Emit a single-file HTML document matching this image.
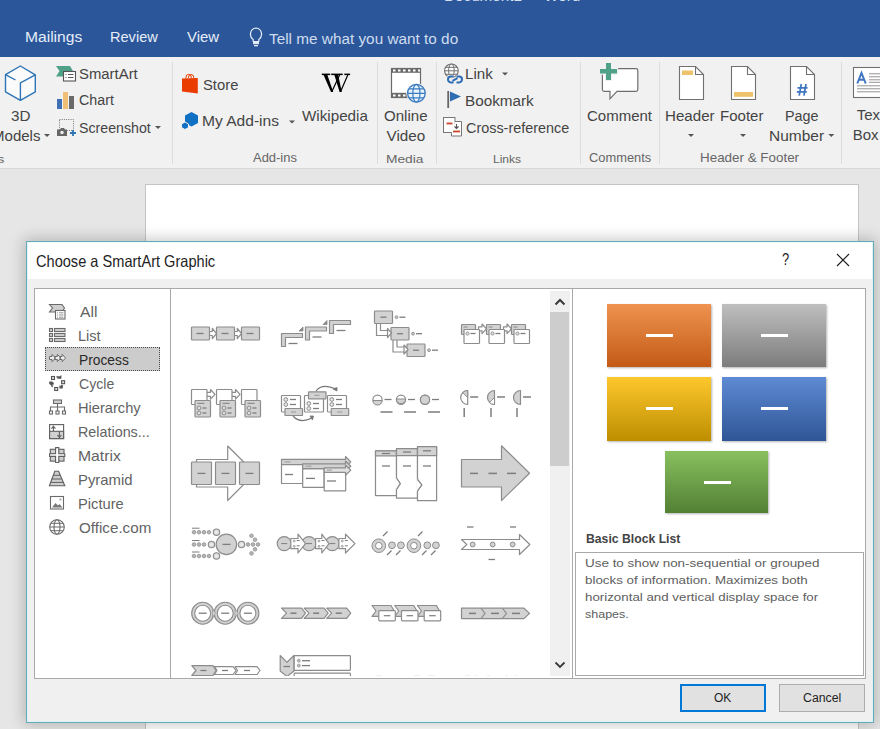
<!DOCTYPE html>
<html><head><meta charset="utf-8">
<style>
*{margin:0;padding:0;box-sizing:border-box}
html,body{width:880px;height:729px;overflow:hidden;background:#e6e6e6;font-family:"Liberation Sans",sans-serif}
.a{position:absolute;white-space:nowrap}
.t{position:absolute;white-space:pre;line-height:1;transform-origin:0 0}
</style></head><body>
<div class="a" style="left:0;top:0;width:880px;height:57px;background:#2b579a"></div>
<div class="a" style="left:0;top:57px;width:880px;height:111px;background:#f1f1f1"></div>
<div class="a" style="left:0;top:168px;width:880px;height:1px;background:#d6d6d6"></div>
<div class="a" style="left:145px;top:184px;width:714px;height:560px;background:#fff;border:1px solid #c4c4c4"></div>
<div class="t" style="left:443.78px;top:-10.67px;font-size:14.97px;color:#d5e0f0;transform:scaleX(1.0194);">Document1  -  Word</div>
<div class="t" style="left:25.05px;top:30.40px;font-size:14.53px;color:#e6edf8;transform:scaleX(1.0745);">Mailings</div>
<div class="t" style="left:110.33px;top:30.40px;font-size:14.53px;color:#e6edf8;transform:scaleX(1.0031);">Review</div>
<div class="t" style="left:187.20px;top:30.40px;font-size:14.53px;color:#e6edf8;transform:scaleX(1.0288);">View</div>
<div class="t" style="left:269.19px;top:32.00px;font-size:14.53px;color:#cfdcef;transform:scaleX(1.0561);">Tell me what you want to do</div>
<div class="a" style="left:172px;top:62px;width:1px;height:102px;background:#dcdcdc"></div>
<div class="a" style="left:377px;top:62px;width:1px;height:102px;background:#dcdcdc"></div>
<div class="a" style="left:436px;top:62px;width:1px;height:102px;background:#dcdcdc"></div>
<div class="a" style="left:580px;top:62px;width:1px;height:102px;background:#dcdcdc"></div>
<div class="a" style="left:659px;top:62px;width:1px;height:102px;background:#dcdcdc"></div>
<div class="a" style="left:841px;top:62px;width:1px;height:102px;background:#dcdcdc"></div>
<div class="t" style="left:10.89px;top:108.60px;font-size:14.53px;color:#444;transform:scaleX(1.0492);">3D</div>
<div class="t" style="left:-8.20px;top:128.50px;font-size:14.53px;color:#444;transform:scaleX(1.0353);">Models</div>
<div class="t" style="left:78.75px;top:66.50px;font-size:14.53px;color:#444;transform:scaleX(1.0258);">SmartArt</div>
<div class="t" style="left:78.79px;top:93.45px;font-size:14.53px;color:#444;transform:scaleX(0.9816);">Chart</div>
<div class="t" style="left:78.79px;top:119.88px;font-size:15.26px;color:#444;transform:scaleX(0.9304);">Screenshot</div>
<div class="t" style="left:202.86px;top:77.94px;font-size:14.24px;color:#444;transform:scaleX(1.0393);">Store</div>
<div class="t" style="left:202.36px;top:113.65px;font-size:14.83px;color:#444;transform:scaleX(1.0494);">My Add-ins</div>
<div class="t" style="left:302.40px;top:107.90px;font-size:15.12px;color:#444;transform:scaleX(1.0060);">Wikipedia</div>
<div class="t" style="left:252.70px;top:151.92px;font-size:12.50px;color:#666;transform:scaleX(1.0357);">Add-ins</div>
<div class="t" style="left:383.50px;top:109.03px;font-size:14.97px;color:#444;transform:scaleX(1.0067);">Online</div>
<div class="t" style="left:386.50px;top:128.08px;font-size:15.26px;color:#444;">Video</div>
<div class="t" style="left:386.30px;top:152.53px;font-size:11.77px;color:#666;transform:scaleX(1.1699);">Media</div>
<div class="t" style="left:465.29px;top:67.45px;font-size:14.83px;color:#444;transform:scaleX(1.0214);">Link</div>
<div class="t" style="left:465.28px;top:93.95px;font-size:14.83px;color:#444;transform:scaleX(1.0301);">Bookmark</div>
<div class="t" style="left:465.68px;top:119.88px;font-size:15.26px;color:#444;transform:scaleX(0.9444);">Cross-reference</div>
<div class="t" style="left:493.34px;top:152.53px;font-size:11.77px;color:#666;transform:scaleX(1.0216);">Links</div>
<div class="t" style="left:586.75px;top:108.08px;font-size:15.26px;color:#444;transform:scaleX(0.9829);">Comment</div>
<div class="t" style="left:588.96px;top:152.04px;font-size:12.35px;color:#666;transform:scaleX(1.0429);">Comments</div>
<div class="t" style="left:665.49px;top:108.08px;font-size:15.26px;color:#444;transform:scaleX(0.9921);">Header</div>
<div class="t" style="left:720.40px;top:108.08px;font-size:15.26px;color:#444;transform:scaleX(0.9852);">Footer</div>
<div class="t" style="left:785.15px;top:108.08px;font-size:15.26px;color:#444;transform:scaleX(0.9399);">Page</div>
<div class="t" style="left:769.16px;top:128.08px;font-size:15.26px;color:#444;transform:scaleX(1.0151);">Number</div>
<div class="t" style="left:700.33px;top:152.04px;font-size:12.35px;color:#666;transform:scaleX(1.0855);">Header &amp; Footer</div>
<div class="t" style="left:856.70px;top:107.53px;font-size:14.97px;color:#444;">Text</div>
<div class="t" style="left:852.80px;top:127.73px;font-size:14.97px;color:#444;">Box</div>
<div class="t" style="left:-3.44px;top:152.53px;font-size:11.77px;color:#666;transform:scaleX(1.2548);">s</div>
<div class="a" style="left:26px;top:241px;width:848px;height:482px;background:#f0f0f0;border:1px solid #67aab9;box-shadow:0 0 14px 2px rgba(0,0,0,.22)"></div>
<div class="a" style="left:27px;top:242px;width:846px;height:37px;background:#fff"></div>
<div class="a" style="left:27px;top:242px;width:846px;height:480px;border:1px solid #dcf3f6;border-top-color:#eefafb"></div>
<div class="t" style="left:35.67px;top:253.22px;font-size:16.28px;color:#1e1e1e;transform:scaleX(0.8968);">Choose a SmartArt Graphic</div>
<div class="t" style="left:782.48px;top:251.97px;font-size:16.57px;color:#1e1e1e;transform:scaleX(0.7795);">?</div>
<div class="a" style="left:34px;top:288px;width:832px;height:391px;background:#fff;border:1px solid #a9a9a9"></div>
<div class="a" style="left:170px;top:289px;width:1px;height:389px;background:#a9a9a9"></div>
<div class="a" style="left:572px;top:289px;width:1px;height:389px;background:#a9a9a9"></div>
<div class="a" style="left:45px;top:347px;width:115px;height:24px;background:#cccccc;border:1px dotted #4a4a4a"></div>
<div class="t" style="left:79.60px;top:304.10px;font-size:15.12px;color:#636363;transform:scaleX(1.0396);">All</div>
<div class="t" style="left:78.44px;top:328.10px;font-size:15.12px;color:#636363;transform:scaleX(0.9631);">List</div>
<div class="t" style="left:78.50px;top:352.10px;font-size:15.12px;color:#2a2a2a;transform:scaleX(0.9129);">Process</div>
<div class="t" style="left:78.89px;top:376.10px;font-size:15.12px;color:#636363;transform:scaleX(0.9344);">Cycle</div>
<div class="t" style="left:78.43px;top:400.10px;font-size:15.12px;color:#636363;transform:scaleX(0.9687);">Hierarchy</div>
<div class="t" style="left:78.45px;top:424.10px;font-size:15.12px;color:#636363;transform:scaleX(0.9492);">Relations...</div>
<div class="t" style="left:78.34px;top:448.10px;font-size:15.12px;color:#636363;transform:scaleX(1.0414);">Matrix</div>
<div class="t" style="left:78.41px;top:472.10px;font-size:15.12px;color:#636363;transform:scaleX(0.9848);">Pyramid</div>
<div class="t" style="left:78.43px;top:496.10px;font-size:15.12px;color:#636363;transform:scaleX(0.9713);">Picture</div>
<div class="t" style="left:78.99px;top:520.10px;font-size:15.12px;color:#636363;transform:scaleX(1.0051);">Office.com</div>
<div class="a" style="left:550px;top:291px;width:20px;height:385px;background:#f0f0f0"></div>
<div class="a" style="left:550px;top:312px;width:19px;height:154px;background:#cdcdcd"></div>
<div class="a" style="left:607px;top:304px;width:104px;height:63px;background:linear-gradient(#ef9350,#c35a16);box-shadow:1px 1px 2px rgba(0,0,0,.3)"><i style="position:absolute;left:39px;top:30px;width:27px;height:3px;background:#fff"></i></div>
<div class="a" style="left:722px;top:304px;width:104px;height:63px;background:linear-gradient(#bfbfbf,#7c7c7c);box-shadow:1px 1px 2px rgba(0,0,0,.3)"><i style="position:absolute;left:39px;top:30px;width:27px;height:3px;background:#fff"></i></div>
<div class="a" style="left:607px;top:377px;width:104px;height:64px;background:linear-gradient(#fdc82d,#bd8e00);box-shadow:1px 1px 2px rgba(0,0,0,.3)"><i style="position:absolute;left:39px;top:30px;width:27px;height:3px;background:#fff"></i></div>
<div class="a" style="left:722px;top:377px;width:104px;height:64px;background:linear-gradient(#5f8bd4,#2e5596);box-shadow:1px 1px 2px rgba(0,0,0,.3)"><i style="position:absolute;left:39px;top:30px;width:27px;height:3px;background:#fff"></i></div>
<div class="a" style="left:665px;top:451px;width:103px;height:62px;background:linear-gradient(#88c05f,#528034);box-shadow:1px 1px 2px rgba(0,0,0,.3)"><i style="position:absolute;left:39px;top:30px;width:27px;height:3px;background:#fff"></i></div>
<div class="t" style="left:585.77px;top:532.94px;font-size:12.35px;color:#444;font-weight:bold;transform:scaleX(0.9893);">Basic Block List</div>
<div class="a" style="left:575px;top:552px;width:289px;height:124px;background:#fff;border:1px solid #a9a9a9"></div>
<div class="t" style="left:584.76px;top:558.00px;font-size:11.34px;color:#5e5e5e;transform:scaleX(1.1861);">Use to show non-sequential or grouped</div>
<div class="t" style="left:584.90px;top:575.00px;font-size:11.34px;color:#5e5e5e;transform:scaleX(1.1794);">blocks of information. Maximizes both</div>
<div class="t" style="left:584.77px;top:592.00px;font-size:11.34px;color:#5e5e5e;transform:scaleX(1.1756);">horizontal and vertical display space for</div>
<div class="t" style="left:585.32px;top:609.00px;font-size:11.34px;color:#5e5e5e;transform:scaleX(1.1039);">shapes.</div>
<div class="a" style="left:680px;top:684px;width:86px;height:28px;background:#e1e1e1;border:2px solid #0078d7"></div>
<div class="a" style="left:779px;top:684px;width:86px;height:28px;background:#e1e1e1;border:1px solid #adadad"></div>
<div class="t" style="left:713.82px;top:692.42px;font-size:12.50px;color:#1e1e1e;transform:scaleX(0.9554);">OK</div>
<div class="t" style="left:802.99px;top:692.42px;font-size:12.50px;color:#1e1e1e;transform:scaleX(0.9840);">Cancel</div>
<svg class="a" style="left:0;top:0" width="880" height="729" viewBox="0 0 880 729"><defs><clipPath id="gc"><rect x="171" y="289" width="379" height="387"/></clipPath></defs><g id="ribbon">
<!-- lightbulb -->
<path d="M253.2,39.6 C249,36.5 249.5,28.8 256,28 C262.5,28.8 263,36.5 258.8,39.6 V41.5 H253.2 Z" fill="none" stroke="#e4ecf7" stroke-width="1.2"/>
<rect x="253" y="41" width="6" height="3.2" fill="#e4ecf7"/>
<rect x="254" y="45" width="4" height="1.3" fill="#e4ecf7"/>
<!-- 3D cube -->
<path d="M20.4,66 L35.3,74.8 L35.3,91.8 L20.4,100.4 L5.5,91.8 L5.5,74.6 Z" fill="#fbfbfb" stroke="#2e75b6" stroke-width="1.4" stroke-linejoin="round"/>
<path d="M35.3,74.8 L20.4,83 L20.4,100.4 M5.5,74.6 L15.5,80" fill="none" stroke="#2e75b6" stroke-width="1.4"/>
<!-- dropdown arrows -->
<path d="M44,134 h6 l-3,3 z" fill="#555"/>
<path d="M155,126 h6 l-3,3 z" fill="#555"/>
<path d="M289,120.5 h6 l-3,3 z" fill="#555"/>
<path d="M502,72.5 h6 l-3,3 z" fill="#555"/>
<path d="M688,134 h6 l-3,3 z" fill="#555"/>
<path d="M740,134 h6 l-3,3 z" fill="#555"/>
<path d="M828.3,134 h6 l-3,3 z" fill="#555"/>
<!-- SmartArt -->
<path d="M56,66 H70 L73,71 L70,76.5 H56 L59.5,71 Z" fill="#4fa287"/>
<rect x="63.5" y="71.5" width="12" height="9.5" fill="#fff" stroke="#555" stroke-width="1.1"/>
<path d="M65.5,74.5 h1 M68,74.5 h5.5 M65.5,77.5 h1 M68,77.5 h5.5" stroke="#555" stroke-width="1"/>
<!-- Chart -->
<rect x="57" y="99" width="5" height="10" fill="#3f6fb5"/>
<rect x="63" y="92" width="5" height="17" fill="#f0bf76"/>
<rect x="69" y="96" width="5" height="13" fill="#6a6a6a"/>
<!-- Screenshot -->
<rect x="59.5" y="119.5" width="14" height="11" fill="none" stroke="#777" stroke-width="1" stroke-dasharray="1,1.2"/>
<path d="M57,129.5 h3 l1,-1.5 h3 l1,1.5 h2 v6.5 h-10 z" fill="#666"/>
<circle cx="62" cy="132.5" r="1.7" fill="#f1f1f1"/>
<path d="M73,130 v6 M70,133 h6" stroke="#2e75b6" stroke-width="1.8"/>
<!-- Store -->
<path d="M186,78.5 v-1.5 a2.6,2.6 0 0 1 5.2,0 v1.5 M188.5,78 v-0.8 a2.6,2.6 0 0 1 5.2,0 v1" fill="none" stroke="#eb3c00" stroke-width="1"/>
<path d="M182,78.5 L197.8,78 L197.8,93.5 L182,91.5 Z" fill="#eb3c00"/>
<!-- My Add-ins -->
<path d="M191.5,112 L198,115.5 L198,123 L191.5,126.5 L185,123 L185,115.5 Z" fill="#1070c4"/>
<path d="M185,122 L188.5,124 L188.5,127.5 L185,129.5 L181.5,127.5 L181.5,124 Z" fill="#1070c4" stroke="#f1f1f1" stroke-width="1"/>
<!-- Wikipedia W -->
<g fill="#000"><rect x="321.8" y="73.6" width="8.4" height="1.5"/><rect x="331.2" y="73.6" width="11.5" height="1.5"/><rect x="344.3" y="73.6" width="5.8" height="1.5"/>
<polygon points="323.6,75 327.4,75 333.2,91.9 331,91.9"/><polygon points="334.4,75 338.2,75 341.8,91.9 339.6,91.9"/></g>
<path d="M331.9,91.5 L339.6,75 M340.6,91.5 L347.8,75" stroke="#000" stroke-width="1.2"/>
<!-- Online video -->
<rect x="391.5" y="68.5" width="29" height="29" fill="#fff" stroke="#6a6a6a" stroke-width="1.2"/>
<rect x="391" y="68" width="30" height="4.8" fill="#6a6a6a"/>
<rect x="391" y="92.8" width="30" height="5" fill="#6a6a6a"/>
<path d="M393,69.5 h2.5 v2 h-2.5z M398,69.5 h2.5 v2 h-2.5z M403,69.5 h2.5 v2 h-2.5z M408,69.5 h2.5 v2 h-2.5z M413,69.5 h2.5 v2 h-2.5z M418,69.5 h2 v2 h-2z M393,94.5 h2.5 v2 h-2.5z M398,94.5 h2.5 v2 h-2.5z M403,94.5 h2.5 v2 h-2.5z" fill="#fff"/>
<circle cx="416.4" cy="93.3" r="10.2" fill="#f1f1f1"/>
<circle cx="416.4" cy="93.3" r="8.8" fill="#e8f3fb" stroke="#3b7cc0" stroke-width="1.3"/>
<ellipse cx="416.4" cy="93.3" rx="3.6" ry="8.8" fill="none" stroke="#3b7cc0" stroke-width="1.2"/>
<path d="M407.6,93.3 h17.6 M409,88.8 h14.8 M409,97.8 h14.8" stroke="#3b7cc0" stroke-width="1.2"/>
<!-- Link -->
<circle cx="451.4" cy="70.8" r="6.8" fill="#fff" stroke="#707070" stroke-width="1.1"/>
<ellipse cx="451.4" cy="70.8" rx="2.8" ry="6.8" fill="none" stroke="#707070" stroke-width="1"/>
<path d="M444.6,70.8 h13.6 M445.6,67.3 h11.6 M445.6,74.3 h11.6" stroke="#707070" stroke-width="1"/>
<path d="M453.5,76.6 h-2.6 a2.9,2.9 0 0 0 0,5.8 h2.6 M456.5,76.6 h2.6 a2.9,2.9 0 0 1 0,5.8 h-2.6 M452.5,80.8 l5,-2.6" fill="none" stroke="#f1f1f1" stroke-width="3.4"/>
<path d="M453.5,76.6 h-2.6 a2.9,2.9 0 0 0 0,5.8 h2.6 M456.5,76.6 h2.6 a2.9,2.9 0 0 1 0,5.8 h-2.6 M452.5,80.8 l5,-2.6" fill="none" stroke="#2e6db4" stroke-width="2"/>
<!-- Bookmark -->
<rect x="447.3" y="91" width="1.8" height="17" fill="#666"/>
<path d="M450,91.5 L461,96.5 L450,101.5 Z" fill="#2e6db4"/>
<!-- Cross reference -->
<rect x="443.5" y="117.5" width="11.5" height="15" fill="#fff" stroke="#777" stroke-width="1"/>
<path d="M446.5,123.5 h6" stroke="#c8472b" stroke-width="1.8"/>
<path d="M455,121.5 h6.5 v14.5 h-10 v-3.5" fill="#fff" stroke="#777" stroke-width="1"/>
<path d="M456.5,124 v4 M454.5,126.5 l2,2 l2,-2" fill="none" stroke="#555" stroke-width="1.1"/>
<path d="M453,131.5 h7" stroke="#c8472b" stroke-width="1.8"/>
<!-- Comment -->
<path d="M604,68.6 H636 a1.8,1.8 0 0 1 1.8,1.8 V89.6 a1.8,1.8 0 0 1 -1.8,1.8 H617 L610,98.8 V91.4 H604.2 a1.8,1.8 0 0 1 -1.8,-1.8 V70.4 a1.8,1.8 0 0 1 1.8,-1.8 Z" fill="#fff" stroke="#6e6e6e" stroke-width="1.2"/>
<path d="M606,63 h5 v6 h6 v4.6 h-6 v6.4 h-5 v-6.4 h-6 v-4.6 h6 z" fill="#4fa287" stroke="#f1f1f1" stroke-width="2.2" paint-order="stroke"/>
<!-- Header -->
<path d="M679.5,66.5 H695.5 L703.5,74.5 V99.5 H679.5 Z" fill="#fff" stroke="#707070" stroke-width="1.1"/>
<path d="M695.5,66.5 V74.5 H703.5" fill="none" stroke="#707070" stroke-width="1.1"/>
<rect x="682" y="70.5" width="11" height="4.5" fill="#edc26a"/>
<!-- Footer -->
<path d="M731.5,66.5 H747.5 L755.5,74.5 V99.5 H731.5 Z" fill="#fff" stroke="#707070" stroke-width="1.1"/>
<path d="M747.5,66.5 V74.5 H755.5" fill="none" stroke="#707070" stroke-width="1.1"/>
<rect x="734" y="92" width="19" height="4.8" fill="#edc26a"/>
<!-- Page number -->
<path d="M790.5,66.5 H806.5 L814.5,74.5 V99.5 H790.5 Z" fill="#fff" stroke="#707070" stroke-width="1.1"/>
<path d="M806.5,66.5 V74.5 H814.5" fill="none" stroke="#707070" stroke-width="1.1"/>
<path d="M801.3,84 L799.2,95.6 M806,84 L803.9,95.6 M797.5,87.8 h10 M796.8,91.8 h10" stroke="#3e76c2" stroke-width="1.7"/>
<!-- Text box -->
<rect x="853.5" y="67.5" width="40" height="30" fill="#fff" stroke="#707070" stroke-width="1.1"/>
<path d="M857.3,83.5 L861.5,73 L865.7,83.5 M858.8,79.8 h5.4" fill="none" stroke="#3e76c2" stroke-width="2"/>
<path d="M869,73.8 h12 M869,76.8 h12 M869,79.8 h12 M869,82.3 h12 M857,85.8 h24 M857,88.8 h24 M857,91.8 h24" stroke="#888" stroke-width="0.9"/>
</g>
<g id="dialog">
<path d="M837,254 L849,266 M849,254 L837,266" stroke="#1e1e1e" stroke-width="1.1"/>
<path d="M555.5,304.5 L560,300 L564.5,304.5" fill="none" stroke="#3a3a3a" stroke-width="2"/>
<path d="M555.5,662.5 L560,667 L564.5,662.5" fill="none" stroke="#3a3a3a" stroke-width="1.8"/>
</g>
<g id="cats" stroke="#6a6a6a" stroke-width="1.1">
<!-- All -->
<path d="M49.5,304.5 H62 L64.5,308 L62,312 H49.5 L52.5,308 Z" fill="#cfcfcf"/>
<rect x="55.5" y="310.5" width="9.5" height="8.5" fill="#fff"/>
<path d="M57,312.8 h1 M59,312.8 h4.5 M57,315 h1 M59,315 h4.5 M57,317.2 h1 M59,317.2 h4.5" stroke="#777" stroke-width="0.8"/>
<!-- List -->
<rect x="49.5" y="328.5" width="3" height="3" fill="#d0d0d0"/>
<rect x="49.5" y="333.5" width="3" height="3" fill="#d0d0d0"/>
<rect x="49.5" y="338.5" width="3" height="3" fill="#d0d0d0"/>
<rect x="54.5" y="328.5" width="10.5" height="3" fill="#d0d0d0"/>
<rect x="54.5" y="333.5" width="10.5" height="3" fill="#d0d0d0"/>
<rect x="54.5" y="338.5" width="10.5" height="3" fill="#d0d0d0"/>
<!-- Process -->
<path d="M49.5,356.5 h2.5 v-2.2 l3.5,3.7 l-3.5,3.7 v-2.2 h-2.5 z M54.8,356.5 h2.5 v-2.2 l3.5,3.7 l-3.5,3.7 v-2.2 h-2.5 z M60.1,356.5 h2 v-2.2 l3.5,3.7 l-3.5,3.7 v-2.2 h-2 z" fill="#ececec" stroke="#6a6a6a" stroke-width="1"/>
<!-- Cycle -->
<rect x="51.5" y="376.5" width="3" height="3" fill="#ddd" stroke="#555" stroke-width="1.1"/>
<rect x="61.6" y="380.7" width="3" height="3" fill="#ddd" stroke="#555" stroke-width="1.1"/>
<rect x="54.7" y="387.5" width="3" height="3" fill="#ddd" stroke="#555" stroke-width="1.1"/>
<path d="M56.3,376.2 h3.6 l1.5,-1.3 v3.8 h-4 v-1.3 h-1.1 z" fill="#555" stroke="none"/>
<path d="M59.4,385.3 l1,0.8 l1.2,-1.3 l1.6,0.6 l-0.4,1.2 v2 h-3.4 z" fill="#555" stroke="none"/>
<path d="M49.2,381.5 h3 l1.6,1.5 v1.5 l-1.5,0.3 l0.8,1.5 l-1,1.2 l-1.2,-2.2 l-1.7,-1.6 z" fill="#555" stroke="none"/>
<!-- Hierarchy -->
<rect x="53.5" y="400" width="8" height="3.5" fill="#d0d0d0"/>
<path d="M57.5,403.5 v3.5 M50.5,411 v-4 h14 v4 M57.5,407 v4" fill="none"/>
<rect x="49.5" y="411" width="3" height="3" fill="#fff"/>
<rect x="56" y="411" width="3" height="3" fill="#fff"/>
<rect x="62.5" y="411" width="3" height="3" fill="#fff"/>
<!-- Relations -->
<rect x="49.6" y="424.6" width="14" height="14" fill="#fff" stroke="#5f5f5f" stroke-width="1.1"/>
<rect x="49.6" y="431.3" width="14" height="7.3" fill="#d0d0d0" stroke="#5f5f5f" stroke-width="1.1"/>
<path d="M53.4,431 V425.5 M51.4,428.6 L53.4,426.3 L55.4,428.6 M59.4,431.5 V438.5 M57.4,435 L59.4,437.3 L61.4,435" fill="none" stroke="#5f5f5f" stroke-width="1.1"/>
<!-- Matrix -->
<rect x="50.3" y="449.3" width="5.5" height="4.6" fill="#cfcfcf" stroke="#5f5f5f" stroke-width="1.1"/>
<rect x="58.5" y="449.3" width="5.5" height="4.6" fill="#cfcfcf" stroke="#5f5f5f" stroke-width="1.1"/>
<rect x="50.3" y="456.3" width="5.5" height="4.8" fill="#cfcfcf" stroke="#5f5f5f" stroke-width="1.1"/>
<rect x="58.5" y="456.3" width="5.5" height="4.8" fill="#cfcfcf" stroke="#5f5f5f" stroke-width="1.1"/>
<path d="M55.6,447.6 h3.2 v6.1 h6 v2.7 h-6 v6.1 h-3.2 v-6.1 h-6 v-2.7 h6 z" fill="#fff" stroke="#5f5f5f" stroke-width="1.1"/>
<!-- Pyramid -->
<path d="M54.8,471.2 h3.8 l6.2,14.6 h-15.4 z" fill="#cfcfcf" stroke="#5f5f5f" stroke-width="1.1"/>
<path d="M53.1,475.3 h7.2 M51.6,479 h10.2 M50.2,482.4 h13" fill="none" stroke="#5f5f5f" stroke-width="1"/>
<!-- Picture -->
<rect x="50.5" y="496.5" width="13" height="12.5" fill="#fff"/>
<path d="M52,507.5 l3.5,-4.5 l2.5,2.5 l1.5,-1.5 l3,3.5 z" fill="#777" stroke="none"/>
<circle cx="60.5" cy="499.5" r="1.3" fill="#bbb" stroke="none"/>
<!-- Globe -->
<circle cx="57" cy="527" r="7.3" fill="#fff"/>
<ellipse cx="57" cy="527" rx="3" ry="7.3" fill="none"/>
<path d="M49.7,527 h14.6 M50.8,523.3 h12.4 M50.8,530.7 h12.4" fill="none" stroke-width="1"/>
</g>
<g clip-path="url(#gc)"><polygon points="208.5,331.5 212.3,331.5 212.3,328.3 216.5,333.5 212.3,338.7 212.3,335.5 208.5,335.5" fill="#fff" stroke="#8c8c8c" stroke-width="1.2" stroke-linejoin="round"/><polygon points="233.5,331.5 237.3,331.5 237.3,328.3 241.5,333.5 237.3,338.7 237.3,335.5 233.5,335.5" fill="#fff" stroke="#8c8c8c" stroke-width="1.2" stroke-linejoin="round"/><rect x="191.5" y="327" width="18" height="13" rx="0.8" fill="#d2d2d2" stroke="#8c8c8c" stroke-width="1.2"/><line x1="196.5" y1="333.5" x2="203.5" y2="333.5" stroke="#7d7d7d" stroke-width="1.3"/><rect x="216.5" y="327" width="18" height="13" rx="0.8" fill="#d2d2d2" stroke="#8c8c8c" stroke-width="1.2"/><line x1="221.5" y1="333.5" x2="228.5" y2="333.5" stroke="#7d7d7d" stroke-width="1.3"/><rect x="241.5" y="327" width="18" height="13" rx="0.8" fill="#d2d2d2" stroke="#8c8c8c" stroke-width="1.2"/><line x1="246.5" y1="333.5" x2="253.5" y2="333.5" stroke="#7d7d7d" stroke-width="1.3"/><polygon points="281.5,333.5 302.5,333.5 302.5,337.5 285.5,337.5 285.5,346.5 281.5,346.5" fill="#d2d2d2" stroke="#8c8c8c" stroke-width="1.2" stroke-linejoin="round"/><line x1="288.5" y1="343.5" x2="297.5" y2="343.5" stroke="#7d7d7d" stroke-width="1.3"/><polygon points="305.5,327 326.5,327 326.5,331 309.5,331 309.5,340 305.5,340" fill="#d2d2d2" stroke="#8c8c8c" stroke-width="1.2" stroke-linejoin="round"/><line x1="312.5" y1="337" x2="321.5" y2="337" stroke="#7d7d7d" stroke-width="1.3"/><polygon points="329.5,320.5 350.5,320.5 350.5,324.5 333.5,324.5 333.5,333.5 329.5,333.5" fill="#d2d2d2" stroke="#8c8c8c" stroke-width="1.2" stroke-linejoin="round"/><line x1="336.5" y1="330.5" x2="345.5" y2="330.5" stroke="#7d7d7d" stroke-width="1.3"/><polygon points="299,331 303,327 303,331" fill="#888" stroke="#888" stroke-width="0.8" stroke-linejoin="round"/><polygon points="323,324.5 327,320.5 327,324.5" fill="#888" stroke="#888" stroke-width="0.8" stroke-linejoin="round"/><rect x="374.5" y="311" width="18" height="12.5" rx="0.8" fill="#d2d2d2" stroke="#8c8c8c" stroke-width="1.2"/><line x1="380.5" y1="317.2" x2="386.5" y2="317.2" stroke="#7d7d7d" stroke-width="1.3"/><circle cx="396.5" cy="317.2" r="1.4" fill="#ccc" stroke="#8c8c8c" stroke-width="0.9"/><line x1="399.5" y1="317.2" x2="405.5" y2="317.2" stroke="#7d7d7d" stroke-width="1.3"/><rect x="391" y="327.5" width="18" height="12.5" rx="0.8" fill="#d2d2d2" stroke="#8c8c8c" stroke-width="1.2"/><line x1="397" y1="333.7" x2="403" y2="333.7" stroke="#7d7d7d" stroke-width="1.3"/><circle cx="413" cy="333.7" r="1.4" fill="#ccc" stroke="#8c8c8c" stroke-width="0.9"/><line x1="416" y1="333.7" x2="422" y2="333.7" stroke="#7d7d7d" stroke-width="1.3"/><rect x="407" y="344" width="18" height="12.5" rx="0.8" fill="#d2d2d2" stroke="#8c8c8c" stroke-width="1.2"/><line x1="413" y1="350.2" x2="419" y2="350.2" stroke="#7d7d7d" stroke-width="1.3"/><circle cx="429" cy="350.2" r="1.4" fill="#ccc" stroke="#8c8c8c" stroke-width="0.9"/><line x1="432" y1="350.2" x2="438" y2="350.2" stroke="#7d7d7d" stroke-width="1.3"/><path d="M376.5,323.5 V335.5 H387.5 M380.5,323.5 V330.5 H387.5" fill="none" stroke="#8c8c8c" stroke-width="1.2" stroke-linejoin="round"/><polygon points="387.5,328.5 391.5,333.0 387.5,337.5" fill="#fff" stroke="#8c8c8c" stroke-width="1.2" stroke-linejoin="round"/><path d="M393,340 V352 H404 M397,340 V347 H404" fill="none" stroke="#8c8c8c" stroke-width="1.2" stroke-linejoin="round"/><polygon points="404,345 408,349.5 404,354" fill="#fff" stroke="#8c8c8c" stroke-width="1.2" stroke-linejoin="round"/><polygon points="478.5,326.8 482.0,326.8 482.0,324 486.5,328.8 482.0,333.6 482.0,330.8 478.5,330.8" fill="#fff" stroke="#8c8c8c" stroke-width="1.2" stroke-linejoin="round"/><polygon points="503.5,326.8 507.0,326.8 507.0,324 511.5,328.8 507.0,333.6 507.0,330.8 503.5,330.8" fill="#fff" stroke="#8c8c8c" stroke-width="1.2" stroke-linejoin="round"/><rect x="461.5" y="324.5" width="14" height="10" rx="0.8" fill="#d2d2d2" stroke="#8c8c8c" stroke-width="1.2"/><line x1="463.5" y1="327" x2="467.5" y2="327" stroke="#9a9a9a" stroke-width="1.3"/><rect x="464.0" y="329.5" width="15.5" height="14" rx="0.8" fill="#fff" stroke="#8c8c8c" stroke-width="1.2"/><circle cx="467.5" cy="333.5" r="1.6" fill="#ddd" stroke="#8c8c8c" stroke-width="0.9"/><line x1="470.5" y1="333.5" x2="475.5" y2="333.5" stroke="#7d7d7d" stroke-width="1.3"/><rect x="486.5" y="324.5" width="14" height="10" rx="0.8" fill="#d2d2d2" stroke="#8c8c8c" stroke-width="1.2"/><line x1="488.5" y1="327" x2="492.5" y2="327" stroke="#9a9a9a" stroke-width="1.3"/><rect x="489.0" y="329.5" width="15.5" height="14" rx="0.8" fill="#fff" stroke="#8c8c8c" stroke-width="1.2"/><circle cx="492.5" cy="333.5" r="1.6" fill="#ddd" stroke="#8c8c8c" stroke-width="0.9"/><line x1="495.5" y1="333.5" x2="500.5" y2="333.5" stroke="#7d7d7d" stroke-width="1.3"/><rect x="511.5" y="324.5" width="14" height="10" rx="0.8" fill="#d2d2d2" stroke="#8c8c8c" stroke-width="1.2"/><line x1="513.5" y1="327" x2="517.5" y2="327" stroke="#9a9a9a" stroke-width="1.3"/><rect x="514.0" y="329.5" width="15.5" height="14" rx="0.8" fill="#fff" stroke="#8c8c8c" stroke-width="1.2"/><circle cx="517.5" cy="333.5" r="1.6" fill="#ddd" stroke="#8c8c8c" stroke-width="0.9"/><line x1="520.5" y1="333.5" x2="525.5" y2="333.5" stroke="#7d7d7d" stroke-width="1.3"/><polygon points="206.5,392.3 210.5,392.3 210.5,389.5 215.0,394.3 210.5,399.1 210.5,396.3 206.5,396.3" fill="#fff" stroke="#8c8c8c" stroke-width="1.2" stroke-linejoin="round"/><polygon points="231.5,392.3 235.5,392.3 235.5,389.5 240.0,394.3 235.5,399.1 235.5,396.3 231.5,396.3" fill="#fff" stroke="#8c8c8c" stroke-width="1.2" stroke-linejoin="round"/><rect x="191.5" y="389.5" width="15.5" height="15" rx="0.8" fill="#fff" stroke="#8c8c8c" stroke-width="1.2"/><rect x="195.0" y="400.5" width="15.5" height="16.5" rx="0.8" fill="#d2d2d2" stroke="#8c8c8c" stroke-width="1.2"/><line x1="197.5" y1="403.3" x2="204.5" y2="403.3" stroke="#7d7d7d" stroke-width="1"/><circle cx="199.0" cy="408" r="1.9" fill="#e0e0e0" stroke="#8c8c8c" stroke-width="1"/><line x1="202.5" y1="408" x2="206.5" y2="408" stroke="#7d7d7d" stroke-width="1.3"/><circle cx="199.0" cy="413" r="1.9" fill="#e0e0e0" stroke="#8c8c8c" stroke-width="1"/><line x1="202.5" y1="413" x2="206.5" y2="413" stroke="#7d7d7d" stroke-width="1.3"/><rect x="216.5" y="389.5" width="15.5" height="15" rx="0.8" fill="#fff" stroke="#8c8c8c" stroke-width="1.2"/><rect x="220.0" y="400.5" width="15.5" height="16.5" rx="0.8" fill="#d2d2d2" stroke="#8c8c8c" stroke-width="1.2"/><line x1="222.5" y1="403.3" x2="229.5" y2="403.3" stroke="#7d7d7d" stroke-width="1"/><circle cx="224.0" cy="408" r="1.9" fill="#e0e0e0" stroke="#8c8c8c" stroke-width="1"/><line x1="227.5" y1="408" x2="231.5" y2="408" stroke="#7d7d7d" stroke-width="1.3"/><circle cx="224.0" cy="413" r="1.9" fill="#e0e0e0" stroke="#8c8c8c" stroke-width="1"/><line x1="227.5" y1="413" x2="231.5" y2="413" stroke="#7d7d7d" stroke-width="1.3"/><rect x="241.5" y="389.5" width="15.5" height="15" rx="0.8" fill="#fff" stroke="#8c8c8c" stroke-width="1.2"/><rect x="245.0" y="400.5" width="15.5" height="16.5" rx="0.8" fill="#d2d2d2" stroke="#8c8c8c" stroke-width="1.2"/><line x1="247.5" y1="403.3" x2="254.5" y2="403.3" stroke="#7d7d7d" stroke-width="1"/><circle cx="249.0" cy="408" r="1.9" fill="#e0e0e0" stroke="#8c8c8c" stroke-width="1"/><line x1="252.5" y1="408" x2="256.5" y2="408" stroke="#7d7d7d" stroke-width="1.3"/><circle cx="249.0" cy="413" r="1.9" fill="#e0e0e0" stroke="#8c8c8c" stroke-width="1"/><line x1="252.5" y1="413" x2="256.5" y2="413" stroke="#7d7d7d" stroke-width="1.3"/><rect x="281.5" y="395.5" width="19" height="16.5" rx="0.8" fill="#fff" stroke="#8c8c8c" stroke-width="1.2"/><circle cx="285.8" cy="399.5" r="1.9" fill="#e6e6e6" stroke="#8c8c8c" stroke-width="1"/><line x1="290.0" y1="399.5" x2="296.0" y2="399.5" stroke="#7d7d7d" stroke-width="1.3"/><circle cx="285.8" cy="404.5" r="1.9" fill="#e6e6e6" stroke="#8c8c8c" stroke-width="1"/><line x1="290.0" y1="404.5" x2="296.0" y2="404.5" stroke="#7d7d7d" stroke-width="1.3"/><rect x="304.5" y="395.5" width="19" height="16.5" rx="0.8" fill="#fff" stroke="#8c8c8c" stroke-width="1.2"/><circle cx="308.8" cy="403.5" r="1.9" fill="#e6e6e6" stroke="#8c8c8c" stroke-width="1"/><line x1="313.0" y1="403.5" x2="319.0" y2="403.5" stroke="#7d7d7d" stroke-width="1.3"/><circle cx="308.8" cy="408.5" r="1.9" fill="#e6e6e6" stroke="#8c8c8c" stroke-width="1"/><line x1="313.0" y1="408.5" x2="319.0" y2="408.5" stroke="#7d7d7d" stroke-width="1.3"/><rect x="327.5" y="395.5" width="19" height="16.5" rx="0.8" fill="#fff" stroke="#8c8c8c" stroke-width="1.2"/><circle cx="331.8" cy="399.5" r="1.9" fill="#e6e6e6" stroke="#8c8c8c" stroke-width="1"/><line x1="336.0" y1="399.5" x2="342.0" y2="399.5" stroke="#7d7d7d" stroke-width="1.3"/><circle cx="331.8" cy="404.5" r="1.9" fill="#e6e6e6" stroke="#8c8c8c" stroke-width="1"/><line x1="336.0" y1="404.5" x2="342.0" y2="404.5" stroke="#7d7d7d" stroke-width="1.3"/><rect x="285" y="408.5" width="17.5" height="7" rx="0.6" fill="#d2d2d2" stroke="#8c8c8c" stroke-width="1.2"/><line x1="291" y1="412.0" x2="296" y2="412.0" stroke="#999" stroke-width="1"/><rect x="308.5" y="391.8" width="17.5" height="7" rx="0.6" fill="#d2d2d2" stroke="#8c8c8c" stroke-width="1.2"/><line x1="314.5" y1="395.3" x2="319.5" y2="395.3" stroke="#999" stroke-width="1"/><rect x="331.2" y="408.5" width="17.5" height="7" rx="0.6" fill="#d2d2d2" stroke="#8c8c8c" stroke-width="1.2"/><line x1="337.2" y1="412.0" x2="342.2" y2="412.0" stroke="#999" stroke-width="1"/><path d="M293,416 Q300,424 312,418" fill="none" stroke="#777" stroke-width="1.2" stroke-linejoin="round"/><polygon points="310,416 313.5,416 312.5,420" fill="#777" stroke="#777" stroke-width="0.8" stroke-linejoin="round"/><path d="M316,391 Q322,383 336,389" fill="none" stroke="#777" stroke-width="1.2" stroke-linejoin="round"/><polygon points="333,389 337,387.5 337,391" fill="#777" stroke="#777" stroke-width="0.8" stroke-linejoin="round"/><circle cx="377.5" cy="399.7" r="4.6" fill="#fff" stroke="#8c8c8c" stroke-width="1.2"/><path d="M372.9,400.5 A4.6,4.6 0 0 0 382.1,400.5 Z" fill="#d2d2d2" stroke="#8c8c8c" stroke-width="1" stroke-linejoin="round"/><line x1="384.5" y1="399.5" x2="391.5" y2="399.5" stroke="#7d7d7d" stroke-width="1.3"/><line x1="380.5" y1="412" x2="392.5" y2="412" stroke="#7d7d7d" stroke-width="1.5"/><circle cx="401" cy="399.7" r="4.6" fill="#fff" stroke="#8c8c8c" stroke-width="1.2"/><path d="M396.4,399 A4.6,4.6 0 0 0 405.6,399 Z" fill="#d2d2d2" stroke="#8c8c8c" stroke-width="1" stroke-linejoin="round"/><line x1="408" y1="399.5" x2="415" y2="399.5" stroke="#7d7d7d" stroke-width="1.3"/><line x1="404" y1="412" x2="416" y2="412" stroke="#7d7d7d" stroke-width="1.5"/><circle cx="425" cy="399.7" r="4.6" fill="#fff" stroke="#8c8c8c" stroke-width="1.2"/><circle cx="425" cy="399.7" r="4.6" fill="#d2d2d2" stroke="#8c8c8c" stroke-width="1.2"/><line x1="432" y1="399.5" x2="439" y2="399.5" stroke="#7d7d7d" stroke-width="1.3"/><line x1="428" y1="412" x2="440" y2="412" stroke="#7d7d7d" stroke-width="1.5"/><path d="M467.7,390.5 A7,7 0 0 0 467.7,404.5 Z" fill="#fff" stroke="#8c8c8c" stroke-width="1.2" stroke-linejoin="round"/><path d="M467.7,390.5 A7,7 0 0 0 462.7,392.6 L467.7,397.5 Z" fill="#d2d2d2" stroke="#8c8c8c" stroke-width="1" stroke-linejoin="round"/><line x1="470.2" y1="397" x2="478.2" y2="397" stroke="#7d7d7d" stroke-width="1.5"/><line x1="464.2" y1="408" x2="464.2" y2="417" stroke="#7d7d7d" stroke-width="1.5"/><path d="M494.5,390.5 A7,7 0 0 0 494.5,404.5 Z" fill="#d2d2d2" stroke="#8c8c8c" stroke-width="1.2" stroke-linejoin="round"/><path d="M494.5,397.5 L489.5,402.4 A7,7 0 0 0 494.5,404.5 Z" fill="#fff" stroke="#8c8c8c" stroke-width="1" stroke-linejoin="round"/><line x1="497.0" y1="397" x2="505.0" y2="397" stroke="#7d7d7d" stroke-width="1.5"/><line x1="491.0" y1="408" x2="491.0" y2="417" stroke="#7d7d7d" stroke-width="1.5"/><path d="M520.5,390.5 A7,7 0 0 0 520.5,404.5 Z" fill="#d2d2d2" stroke="#8c8c8c" stroke-width="1.2" stroke-linejoin="round"/><line x1="523.0" y1="397" x2="531.0" y2="397" stroke="#7d7d7d" stroke-width="1.5"/><line x1="517.0" y1="408" x2="517.0" y2="417" stroke="#7d7d7d" stroke-width="1.5"/><polygon points="196.5,459.5 227.7,459.5 227.7,446 255,473.2 227.7,500.5 227.7,487 196.5,487" fill="#fff" stroke="#8c8c8c" stroke-width="1.2" stroke-linejoin="round"/><rect x="191.5" y="462" width="20" height="22.5" rx="0.8" fill="#d2d2d2" stroke="#8c8c8c" stroke-width="1.2"/><line x1="197.5" y1="473.4" x2="205.5" y2="473.4" stroke="#7d7d7d" stroke-width="1.3"/><rect x="215.5" y="462" width="20" height="22.5" rx="0.8" fill="#d2d2d2" stroke="#8c8c8c" stroke-width="1.2"/><line x1="221.5" y1="473.4" x2="229.5" y2="473.4" stroke="#7d7d7d" stroke-width="1.3"/><rect x="239.5" y="462" width="20" height="22.5" rx="0.8" fill="#d2d2d2" stroke="#8c8c8c" stroke-width="1.2"/><line x1="245.5" y1="473.4" x2="253.5" y2="473.4" stroke="#7d7d7d" stroke-width="1.3"/><rect x="281.5" y="464.5" width="21.2" height="19" rx="0.3" fill="#fff" stroke="#8c8c8c" stroke-width="1.2"/><polygon points="281.5,459.3 345.5,459.3 345.5,456.5 350.8,461.9 345.5,467.3 345.5,464.6 281.5,464.6" fill="#d2d2d2" stroke="#8c8c8c" stroke-width="1.2" stroke-linejoin="round"/><line x1="284.5" y1="461.9" x2="290.5" y2="461.9" stroke="#999" stroke-width="1"/><rect x="302.7" y="468.6" width="21.4" height="18.7" rx="0.3" fill="#fff" stroke="#8c8c8c" stroke-width="1.2"/><polygon points="302.7,463.8 345.5,463.8 345.5,461 350.8,466.2 345.5,471.4 345.5,468.6 302.7,468.6" fill="#d2d2d2" stroke="#8c8c8c" stroke-width="1.2" stroke-linejoin="round"/><line x1="305.5" y1="466.2" x2="311.5" y2="466.2" stroke="#999" stroke-width="1"/><rect x="324.2" y="472.4" width="21.5" height="18.5" rx="0.3" fill="#fff" stroke="#8c8c8c" stroke-width="1.2"/><polygon points="324.2,467.8 345.5,467.8 345.5,465 350.8,470.1 345.5,475.2 345.5,472.4 324.2,472.4" fill="#e0e0e0" stroke="#8c8c8c" stroke-width="1.2" stroke-linejoin="round"/><line x1="326.5" y1="470.1" x2="332" y2="470.1" stroke="#999" stroke-width="1"/><line x1="285" y1="474.5" x2="293" y2="474.5" stroke="#7d7d7d" stroke-width="1.3"/><line x1="306" y1="478.4" x2="315" y2="478.4" stroke="#7d7d7d" stroke-width="1.3"/><line x1="327" y1="481" x2="336" y2="481" stroke="#7d7d7d" stroke-width="1.3"/><rect x="375.5" y="450.8" width="21" height="44.8" rx="0.3" fill="#fff" stroke="#8c8c8c" stroke-width="1.2"/><rect x="375.5" y="450.8" width="21" height="5" rx="0.3" fill="#d2d2d2" stroke="#8c8c8c" stroke-width="1.2"/><path d="M396.5,448.6 H417.5 V498.2 H396.5 V489.5 L400.2,483.6 L396.5,478 Z" fill="#fff" stroke="#8c8c8c" stroke-width="1.2" stroke-linejoin="round"/><polygon points="395.6,477 400.2,483.6 395.6,490.5" fill="#fff" stroke="none" stroke-width="0" stroke-linejoin="round"/><path d="M396.5,478 L400.2,483.6 L396.5,489.5" fill="none" stroke="#8c8c8c" stroke-width="1.2" stroke-linejoin="round"/><rect x="396.5" y="448.6" width="21" height="7" rx="0.3" fill="#d2d2d2" stroke="#8c8c8c" stroke-width="1.2"/><path d="M417.5,446.7 H436.6 V500.7 H417.5 V490.9 L421.8,484.8 L417.5,479.5 Z" fill="#fff" stroke="#8c8c8c" stroke-width="1.2" stroke-linejoin="round"/><polygon points="416.6,478.5 421.8,484.8 416.6,492" fill="#fff" stroke="none" stroke-width="0" stroke-linejoin="round"/><path d="M417.5,479.5 L421.8,484.8 L417.5,490.9" fill="none" stroke="#8c8c8c" stroke-width="1.2" stroke-linejoin="round"/><rect x="417.5" y="446.7" width="19.1" height="9" rx="0.3" fill="#d2d2d2" stroke="#8c8c8c" stroke-width="1.2"/><line x1="382" y1="453.5" x2="390" y2="453.5" stroke="#7d7d7d" stroke-width="1.3"/><line x1="403" y1="452" x2="411" y2="452" stroke="#7d7d7d" stroke-width="1.3"/><line x1="423" y1="450.8" x2="431" y2="450.8" stroke="#7d7d7d" stroke-width="1.3"/><line x1="382" y1="466" x2="390" y2="466" stroke="#7d7d7d" stroke-width="1.3"/><line x1="403" y1="466" x2="411" y2="466" stroke="#7d7d7d" stroke-width="1.3"/><line x1="423" y1="466" x2="431" y2="466" stroke="#7d7d7d" stroke-width="1.3"/><polygon points="461.5,459.5 501.5,459.5 501.5,445.8 529.5,473.2 501.5,500.6 501.5,487 461.5,487" fill="#d2d2d2" stroke="#8c8c8c" stroke-width="1.2" stroke-linejoin="round"/><line x1="470" y1="473.4" x2="478" y2="473.4" stroke="#7d7d7d" stroke-width="1.5"/><line x1="488.5" y1="473.4" x2="497" y2="473.4" stroke="#7d7d7d" stroke-width="1.5"/><line x1="507" y1="473.4" x2="516" y2="473.4" stroke="#7d7d7d" stroke-width="1.5"/><circle cx="226.4" cy="544.4" r="10.2" fill="#d2d2d2" stroke="#8c8c8c" stroke-width="1.2"/><line x1="222.5" y1="544.4" x2="230.5" y2="544.4" stroke="#7d7d7d" stroke-width="1.3"/><line x1="192" y1="528.2" x2="199.5" y2="528.2" stroke="#7d7d7d" stroke-width="1"/><circle cx="194" cy="532.2" r="1.8" fill="#b4b4b4" stroke="#999" stroke-width="0.9"/><circle cx="199" cy="532.2" r="1.8" fill="#b4b4b4" stroke="#999" stroke-width="0.9"/><circle cx="204" cy="532.2" r="1.8" fill="#b4b4b4" stroke="#999" stroke-width="0.9"/><circle cx="209" cy="532.2" r="1.8" fill="#b4b4b4" stroke="#999" stroke-width="0.9"/><circle cx="216.5" cy="532.2" r="3.2" fill="#d8d8d8" stroke="#8c8c8c" stroke-width="1.1"/><circle cx="216.5" cy="532.2" r="1.6" fill="#ececec" stroke="none" stroke-width="0"/><line x1="192" y1="540.5" x2="199.5" y2="540.5" stroke="#7d7d7d" stroke-width="1"/><circle cx="194" cy="544.5" r="1.8" fill="#b4b4b4" stroke="#999" stroke-width="0.9"/><circle cx="199" cy="544.5" r="1.8" fill="#b4b4b4" stroke="#999" stroke-width="0.9"/><circle cx="204" cy="544.5" r="1.8" fill="#b4b4b4" stroke="#999" stroke-width="0.9"/><circle cx="211.5" cy="544.5" r="3.2" fill="#d8d8d8" stroke="#8c8c8c" stroke-width="1.1"/><circle cx="211.5" cy="544.5" r="1.6" fill="#ececec" stroke="none" stroke-width="0"/><line x1="192" y1="552" x2="199.5" y2="552" stroke="#7d7d7d" stroke-width="1"/><circle cx="194" cy="556" r="1.8" fill="#b4b4b4" stroke="#999" stroke-width="0.9"/><circle cx="199" cy="556" r="1.8" fill="#b4b4b4" stroke="#999" stroke-width="0.9"/><circle cx="204" cy="556" r="1.8" fill="#b4b4b4" stroke="#999" stroke-width="0.9"/><circle cx="209" cy="556" r="1.8" fill="#b4b4b4" stroke="#999" stroke-width="0.9"/><circle cx="216.5" cy="556" r="3.2" fill="#d8d8d8" stroke="#8c8c8c" stroke-width="1.1"/><circle cx="216.5" cy="556" r="1.6" fill="#ececec" stroke="none" stroke-width="0"/><circle cx="241.5" cy="544.5" r="3.2" fill="#d8d8d8" stroke="#8c8c8c" stroke-width="1.1"/><circle cx="241.5" cy="544.5" r="1.6" fill="#ececec" stroke="none" stroke-width="0"/><circle cx="248" cy="544.5" r="1.8" fill="#b4b4b4" stroke="#999" stroke-width="0.9"/><circle cx="253" cy="544.5" r="1.8" fill="#b4b4b4" stroke="#999" stroke-width="0.9"/><circle cx="258" cy="544.5" r="1.8" fill="#b4b4b4" stroke="#999" stroke-width="0.9"/><circle cx="251.5" cy="535.8" r="1.8" fill="#b4b4b4" stroke="#999" stroke-width="0.9"/><circle cx="255" cy="539.7" r="1.8" fill="#b4b4b4" stroke="#999" stroke-width="0.9"/><circle cx="255" cy="549.3" r="1.8" fill="#b4b4b4" stroke="#999" stroke-width="0.9"/><circle cx="251.5" cy="553.4" r="1.8" fill="#b4b4b4" stroke="#999" stroke-width="0.9"/><circle cx="284.2" cy="543.6" r="7" fill="#d2d2d2" stroke="#8c8c8c" stroke-width="1.2"/><line x1="281.2" y1="543.6" x2="287.2" y2="543.6" stroke="#7d7d7d" stroke-width="1"/><circle cx="309" cy="543.6" r="7" fill="#d2d2d2" stroke="#8c8c8c" stroke-width="1.2"/><line x1="306" y1="543.6" x2="312" y2="543.6" stroke="#7d7d7d" stroke-width="1"/><circle cx="332.3" cy="543.6" r="7" fill="#d2d2d2" stroke="#8c8c8c" stroke-width="1.2"/><line x1="329.3" y1="543.6" x2="335.3" y2="543.6" stroke="#7d7d7d" stroke-width="1"/><polygon points="290.8,538.5 298,538.5 298,534.2 305.5,543.6 298,553 298,548.7 290.8,548.7" fill="#fff" stroke="#8c8c8c" stroke-width="1.2" stroke-linejoin="round"/><circle cx="294.2" cy="541" r="1" fill="#ddd" stroke="#8c8c8c" stroke-width="0.7"/><line x1="296.7" y1="540.5" x2="299.7" y2="540.5" stroke="#7d7d7d" stroke-width="1"/><circle cx="294.2" cy="546.3" r="1" fill="#ddd" stroke="#8c8c8c" stroke-width="0.7"/><line x1="296.7" y1="545.8" x2="299.7" y2="545.8" stroke="#7d7d7d" stroke-width="1"/><polygon points="315.6,538.5 321.8,538.5 321.8,534.2 329,543.6 321.8,553 321.8,548.7 315.6,548.7" fill="#fff" stroke="#8c8c8c" stroke-width="1.2" stroke-linejoin="round"/><circle cx="319" cy="541" r="1" fill="#ddd" stroke="#8c8c8c" stroke-width="0.7"/><line x1="321.5" y1="540.5" x2="324.5" y2="540.5" stroke="#7d7d7d" stroke-width="1"/><circle cx="319" cy="546.3" r="1" fill="#ddd" stroke="#8c8c8c" stroke-width="0.7"/><line x1="321.5" y1="545.8" x2="324.5" y2="545.8" stroke="#7d7d7d" stroke-width="1"/><polygon points="338.90000000000003,538.5 345.5,538.5 345.5,534.2 355,543.6 345.5,553 345.5,548.7 338.90000000000003,548.7" fill="#fff" stroke="#8c8c8c" stroke-width="1.2" stroke-linejoin="round"/><circle cx="342.3" cy="541" r="1" fill="#ddd" stroke="#8c8c8c" stroke-width="0.7"/><line x1="344.8" y1="540.5" x2="347.8" y2="540.5" stroke="#7d7d7d" stroke-width="1"/><circle cx="342.3" cy="546.3" r="1" fill="#ddd" stroke="#8c8c8c" stroke-width="0.7"/><line x1="344.8" y1="545.8" x2="347.8" y2="545.8" stroke="#7d7d7d" stroke-width="1"/><circle cx="378.8" cy="545.7" r="6.8" fill="#d2d2d2" stroke="#8c8c8c" stroke-width="1"/><circle cx="378.8" cy="545.7" r="3.3" fill="#fff" stroke="#8c8c8c" stroke-width="1"/><circle cx="413.9" cy="545.7" r="6.8" fill="#d2d2d2" stroke="#8c8c8c" stroke-width="1"/><circle cx="413.9" cy="545.7" r="3.3" fill="#fff" stroke="#8c8c8c" stroke-width="1"/><circle cx="392" cy="545.3" r="3.4" fill="#d2d2d2" stroke="#8c8c8c" stroke-width="1"/><circle cx="400.9" cy="545.3" r="3.4" fill="#d2d2d2" stroke="#8c8c8c" stroke-width="1"/><circle cx="427.3" cy="545.3" r="3.4" fill="#d2d2d2" stroke="#8c8c8c" stroke-width="1"/><circle cx="435.9" cy="545.3" r="3.4" fill="#d2d2d2" stroke="#8c8c8c" stroke-width="1"/><line x1="383" y1="536" x2="387.5" y2="531.5" stroke="#7d7d7d" stroke-width="1.3"/><line x1="418" y1="536" x2="422.5" y2="531.5" stroke="#7d7d7d" stroke-width="1.3"/><line x1="387" y1="555" x2="391.5" y2="550.5" stroke="#7d7d7d" stroke-width="1.3"/><line x1="396" y1="555" x2="400.5" y2="550.5" stroke="#7d7d7d" stroke-width="1.3"/><line x1="422" y1="555" x2="426.5" y2="550.5" stroke="#7d7d7d" stroke-width="1.3"/><line x1="431" y1="555" x2="435.5" y2="550.5" stroke="#7d7d7d" stroke-width="1.3"/><polygon points="461.5,539.5 519.5,539.5 519.5,534.5 529.8,544.5 519.5,554.5 519.5,549.5 461.5,549.5 466.8,544.5" fill="#fff" stroke="#8c8c8c" stroke-width="1.2" stroke-linejoin="round"/><circle cx="472.7" cy="544.5" r="2.4" fill="#d2d2d2" stroke="#8c8c8c" stroke-width="1"/><circle cx="492.7" cy="544.5" r="2.4" fill="#d2d2d2" stroke="#8c8c8c" stroke-width="1"/><circle cx="512.7" cy="544.5" r="2.4" fill="#d2d2d2" stroke="#8c8c8c" stroke-width="1"/><line x1="467" y1="527" x2="473.5" y2="527" stroke="#7d7d7d" stroke-width="1.3"/><line x1="510" y1="527" x2="516" y2="527" stroke="#7d7d7d" stroke-width="1.3"/><line x1="488.5" y1="559.5" x2="495" y2="559.5" stroke="#7d7d7d" stroke-width="1.3"/><circle cx="202.7" cy="613.2" r="11" fill="#d2d2d2" stroke="#8c8c8c" stroke-width="1.1"/><circle cx="225.2" cy="613.2" r="11" fill="#d2d2d2" stroke="#8c8c8c" stroke-width="1.1"/><circle cx="247.9" cy="613.2" r="11" fill="#d2d2d2" stroke="#8c8c8c" stroke-width="1.1"/><circle cx="202.7" cy="613.2" r="8" fill="#fff" stroke="#8c8c8c" stroke-width="1.1"/><line x1="198.7" y1="613.2" x2="206.7" y2="613.2" stroke="#7d7d7d" stroke-width="1.3"/><circle cx="225.2" cy="613.2" r="8" fill="#fff" stroke="#8c8c8c" stroke-width="1.1"/><line x1="221.2" y1="613.2" x2="229.2" y2="613.2" stroke="#7d7d7d" stroke-width="1.3"/><circle cx="247.9" cy="613.2" r="8" fill="#fff" stroke="#8c8c8c" stroke-width="1.1"/><line x1="243.9" y1="613.2" x2="251.9" y2="613.2" stroke="#7d7d7d" stroke-width="1.3"/><polygon points="212.5,609.5 216.0,613.2 212.5,617" fill="#d2d2d2" stroke="#8c8c8c" stroke-width="0.6" stroke-linejoin="round"/><polygon points="235,609.5 238.5,613.2 235,617" fill="#d2d2d2" stroke="#8c8c8c" stroke-width="0.6" stroke-linejoin="round"/><polygon points="281.5,608.2 301.5,608.2 305.5,613.2 301.5,618.3 281.5,618.3 286.5,613.2" fill="#d2d2d2" stroke="#8c8c8c" stroke-width="1.2" stroke-linejoin="round"/><line x1="290.5" y1="613.2" x2="296.5" y2="613.2" stroke="#7d7d7d" stroke-width="1.5"/><polygon points="304.1,608.2 324.1,608.2 328.1,613.2 324.1,618.3 304.1,618.3 309.1,613.2" fill="#d2d2d2" stroke="#8c8c8c" stroke-width="1.2" stroke-linejoin="round"/><line x1="313.1" y1="613.2" x2="319.1" y2="613.2" stroke="#7d7d7d" stroke-width="1.5"/><polygon points="326.7,608.2 346.7,608.2 350.7,613.2 346.7,618.3 326.7,618.3 331.7,613.2" fill="#d2d2d2" stroke="#8c8c8c" stroke-width="1.2" stroke-linejoin="round"/><line x1="335.7" y1="613.2" x2="341.7" y2="613.2" stroke="#7d7d7d" stroke-width="1.5"/><polygon points="372,605.5 391,605.5 394,610.5 391,616.4 372,616.4 376,611" fill="#d2d2d2" stroke="#8c8c8c" stroke-width="1.2" stroke-linejoin="round"/><polygon points="394.7,605.5 413.7,605.5 416.7,610.5 413.7,616.4 394.7,616.4 398.7,611" fill="#d2d2d2" stroke="#8c8c8c" stroke-width="1.2" stroke-linejoin="round"/><polygon points="417.4,605.5 436.4,605.5 439.4,610.5 436.4,616.4 417.4,616.4 421.4,611" fill="#d2d2d2" stroke="#8c8c8c" stroke-width="1.2" stroke-linejoin="round"/><rect x="378.8" y="610.6" width="16.5" height="10.2" rx="0.8" fill="#fff" stroke="#8c8c8c" stroke-width="1.2"/><line x1="383.8" y1="615.7" x2="390.3" y2="615.7" stroke="#7d7d7d" stroke-width="1.2"/><rect x="401.5" y="610.6" width="16.5" height="10.2" rx="0.8" fill="#fff" stroke="#8c8c8c" stroke-width="1.2"/><line x1="406.5" y1="615.7" x2="413.0" y2="615.7" stroke="#7d7d7d" stroke-width="1.2"/><rect x="424.2" y="610.6" width="16.5" height="10.2" rx="0.8" fill="#fff" stroke="#8c8c8c" stroke-width="1.2"/><line x1="429.2" y1="615.7" x2="435.7" y2="615.7" stroke="#7d7d7d" stroke-width="1.2"/><polygon points="461.5,608.2 524,608.2 529.5,613.4 524,618.6 461.5,618.6" fill="#d2d2d2" stroke="#8c8c8c" stroke-width="1.2" stroke-linejoin="round"/><path d="M481,608.2 L485,613.4 L481,618.6 M502.3,608.2 L506.5,613.4 L502.3,618.6" fill="none" stroke="#8c8c8c" stroke-width="1.1" stroke-linejoin="round"/><line x1="469" y1="613.4" x2="476" y2="613.4" stroke="#7d7d7d" stroke-width="1.5"/><line x1="491" y1="613.4" x2="499" y2="613.4" stroke="#7d7d7d" stroke-width="1.5"/><line x1="512" y1="613.4" x2="520" y2="613.4" stroke="#7d7d7d" stroke-width="1.5"/><polygon points="191.8,665.6 213,665.6 216,670.5 213,675.5 191.8,675.5 196,670.5" fill="#d2d2d2" stroke="#8c8c8c" stroke-width="1.2" stroke-linejoin="round"/><polygon points="214.5,666.7 233,666.7 236,670.5 233,674.5 214.5,674.5 217,670.5" fill="#fff" stroke="#8c8c8c" stroke-width="1.2" stroke-linejoin="round"/><polygon points="235,666.7 257,666.7 260,670.5 257,674.5 235,674.5 237.5,670.5" fill="#fff" stroke="#8c8c8c" stroke-width="1.2" stroke-linejoin="round"/><line x1="200.5" y1="670.5" x2="206.5" y2="670.5" stroke="#7d7d7d" stroke-width="1.3"/><line x1="222" y1="670.5" x2="228" y2="670.5" stroke="#7d7d7d" stroke-width="1.3"/><line x1="244" y1="670.5" x2="250" y2="670.5" stroke="#7d7d7d" stroke-width="1.3"/><polygon points="280.2,655.5 287,662.3 294,655.5 294,671 287,676.5 280.2,671" fill="#d2d2d2" stroke="#8c8c8c" stroke-width="1.2" stroke-linejoin="round"/><line x1="283.5" y1="666.5" x2="290" y2="666.5" stroke="#7d7d7d" stroke-width="1.3"/><rect x="294.2" y="655.6" width="56.2" height="14.8" rx="0.8" fill="#fff" stroke="#8c8c8c" stroke-width="1.2"/><rect x="294.2" y="673.2" width="56.2" height="14.8" rx="0.8" fill="#fff" stroke="#8c8c8c" stroke-width="1.2"/><circle cx="298.8" cy="660.7" r="1.6" fill="#b5b5b5" stroke="#999" stroke-width="0.6"/><line x1="302" y1="660.7" x2="310" y2="660.7" stroke="#7d7d7d" stroke-width="1.3"/><circle cx="298.8" cy="665.6" r="1.6" fill="#b5b5b5" stroke="#999" stroke-width="0.6"/><line x1="302" y1="665.6" x2="310" y2="665.6" stroke="#7d7d7d" stroke-width="1.3"/><line x1="376" y1="676.5" x2="382" y2="676.5" stroke="#999" stroke-width="1.3"/><line x1="414" y1="676.5" x2="420" y2="676.5" stroke="#999" stroke-width="1.3"/><line x1="428" y1="676.5" x2="435" y2="676.5" stroke="#999" stroke-width="1.3"/><line x1="465" y1="676.5" x2="470" y2="676.5" stroke="#999" stroke-width="1.3"/><line x1="475" y1="676.5" x2="478" y2="676.5" stroke="#999" stroke-width="1.3"/><line x1="487" y1="676.5" x2="490" y2="676.5" stroke="#999" stroke-width="1.3"/><line x1="505" y1="676.5" x2="508" y2="676.5" stroke="#999" stroke-width="1.3"/><line x1="515" y1="676.5" x2="518" y2="676.5" stroke="#999" stroke-width="1.3"/></g></svg>
</body></html>
